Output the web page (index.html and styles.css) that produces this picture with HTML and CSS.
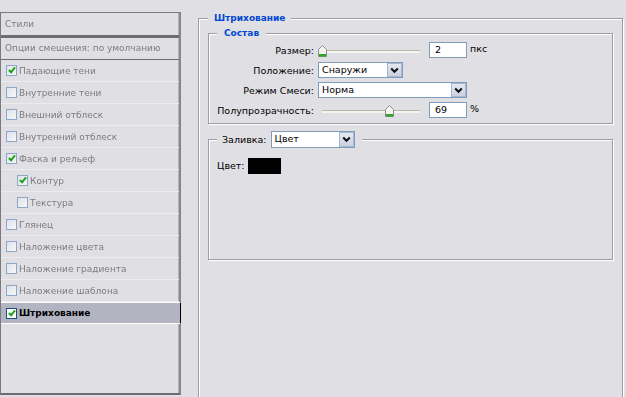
FILE: index.html
```html
<!DOCTYPE html>
<html lang="ru">
<head>
<meta charset="utf-8">
<title>Стиль слоя — Штрихование</title>
<link rel="stylesheet" href="styles.css">
</head>
<body>
<div class="dialog">
  <aside class="styles-panel">
    <div class="panel-head">Стили</div>
    <div class="panel-blend">Опции смешения: по умолчанию</div>
    <ul class="fx-list">
      <li class="fx"><span class="cb on"></span>Падающие тени</li>
      <li class="fx"><span class="cb"></span>Внутренние тени</li>
      <li class="fx"><span class="cb"></span>Внешний отблеск</li>
      <li class="fx"><span class="cb"></span>Внутренний отблеск</li>
      <li class="fx"><span class="cb on"></span>Фаска и рельеф</li>
      <li class="fx sub"><span class="cb on"></span>Контур</li>
      <li class="fx sub"><span class="cb"></span>Текстура</li>
      <li class="fx"><span class="cb"></span>Глянец</li>
      <li class="fx"><span class="cb"></span>Наложение цвета</li>
      <li class="fx"><span class="cb"></span>Наложение градиента</li>
      <li class="fx"><span class="cb"></span>Наложение шаблона</li>
      <li class="fx active"><span class="cb on"></span>Штрихование</li>
    </ul>
  </aside>

  <main class="settings">
    <fieldset class="group outer">
      <legend class="title">Штрихование</legend>

      <fieldset class="group structure">
        <legend class="title sub-title">Состав</legend>
        <div class="form-grid">
          <span class="lbl">Размер:</span>
          <div class="ctrl">
            <div class="slider">
              <div class="track"></div>
              <svg class="thumb" style="left:0px" width="9" height="12" viewBox="0 0 9 12"><path d="M0.5 4.5 L4.5 0.5 L8.5 4.5 V11.5 H0.5 Z" fill="#f3f3f0" stroke="#8d8d8a"/><rect x="1" y="9" width="7" height="2.5" fill="#2ba82b"/></svg>
            </div>
            <span class="field">2</span>
            <span class="unit">пкс</span>
          </div>

          <span class="lbl">Положение:</span>
          <div class="ctrl">
            <div class="select w85"><span class="sel-text">Снаружи</span><span class="dd"><svg width="9" height="7" viewBox="0 0 9 7"><path d="M1.2 1.5 L4.5 4.8 L7.8 1.5" fill="none" stroke="#111" stroke-width="2"/></svg></span></div>
          </div>

          <span class="lbl">Режим Смеси:</span>
          <div class="ctrl">
            <div class="select w149"><span class="sel-text">Норма</span><span class="dd"><svg width="9" height="7" viewBox="0 0 9 7"><path d="M1.2 1.5 L4.5 4.8 L7.8 1.5" fill="none" stroke="#111" stroke-width="2"/></svg></span></div>
          </div>

          <span class="lbl">Полупрозрачность:</span>
          <div class="ctrl">
            <div class="slider">
              <div class="track"></div>
              <svg class="thumb" style="left:67px" width="9" height="12" viewBox="0 0 9 12"><path d="M0.5 4.5 L4.5 0.5 L8.5 4.5 V11.5 H0.5 Z" fill="#f3f3f0" stroke="#8d8d8a"/><rect x="1" y="9" width="7" height="2.5" fill="#2ba82b"/></svg>
            </div>
            <span class="field">69</span>
            <span class="unit">%</span>
          </div>
        </div>
      </fieldset>

      <fieldset class="group fill">
        <legend class="fill-legend">
          <span>Заливка:</span>
          <div class="select w84 tall"><span class="sel-text">Цвет</span><span class="dd"><svg width="9" height="7" viewBox="0 0 9 7"><path d="M1.2 1.5 L4.5 4.8 L7.8 1.5" fill="none" stroke="#111" stroke-width="2"/></svg></span></div>
        </legend>
        <div class="fill-body">
          <span>Цвет:</span>
          <span class="swatch"></span>
        </div>
      </fieldset>
    </fieldset>
  </main>
</div>
</body>
</html>
```

FILE: styles.css
```css
html, body {
  margin: 0;
  padding: 0;
}

body {
  width: 626px;
  height: 397px;
  overflow: hidden;
  background: #e0dfe3;
  font-family: "DejaVu Sans", "Noto Sans", sans-serif;
  font-size: 9.5px;
  color: #000;
}

.dialog {
  display: flex;
  align-items: flex-start;
}

/* ---------- left: styles list ---------- */
.styles-panel {
  width: 181px;
  height: 383px;
  margin-top: 12px;
  box-sizing: border-box;
  border-top: 1px solid #7b7b7f;
  border-left: 1px solid #7b7b7f;
  border-right: 2px solid #88888c;
  border-bottom: 2px solid #6c6c70;
  box-shadow: inset -1px 0 0 #b4b4b8;
  display: flex;
  flex-direction: column;
  font-size: 9px;
}

.panel-head,
.panel-blend {
  padding-left: 4px;
  color: #7c7c80;
  filter: blur(0.5px);
}

.panel-head {
  height: 22px;
  line-height: 22px;
  border-bottom: 3px solid #6e6e72;
}

.panel-blend {
  height: 21px;
  line-height: 21px;
  border-bottom: 1px solid #6e6e72;
}

.fx-list {
  list-style: none;
  margin: 0;
  padding: 0;
}

.fx {
  height: 21px;
  border-bottom: 1px solid #ececef;
  display: flex;
  align-items: center;
  gap: 2px;
  padding-left: 5px;
  color: #7c7c80;
  filter: blur(0.5px);
}

.fx.sub {
  padding-left: 16px;
}

.fx.active {
  height: 20px;
  border-top: 1px solid #fff;
  border-bottom: 1px solid #fff;
  border-right: 1px solid #000;
  margin-right: -2px;
  background: #b2b5c1;
  color: #000;
  font-weight: bold;
  filter: none;
}

.cb {
  position: relative;
  width: 11px;
  height: 11px;
  box-sizing: border-box;
  border: 1px solid #8fa6c4;
  background: linear-gradient(135deg, #dfe3ea, #f6f7f9);
  flex: none;
}

.fx.active .cb {
  border-color: #1d4f86;
  background: #fff;
}

.cb.on::after {
  content: "";
  position: absolute;
  left: 3px;
  top: 0px;
  width: 2px;
  height: 5px;
  border: solid #1fa31f;
  border-width: 0 2px 2px 0;
  transform: rotate(40deg);
}

/* ---------- right: settings ---------- */
.settings {
  margin-left: 17px;
  width: 425px;
  flex: none;
}

.group {
  margin: 0;
  min-width: 0;
  border: 1px solid #9c9ca1;
  box-shadow: inset 1px 1px 0 #fff, 1px 1px 0 #fff;
}

.outer {
  margin-top: 12px;
  padding: 3px 9px 0;
  height: 400px;
  box-sizing: border-box;
}

.title {
  padding: 0 6px;
  line-height: 12px;
  height: 12px;
  color: #0047d4;
  font-weight: bold;
  font-size: 9px;
  background: #e0dfe3;
}

.structure {
  padding: 1px 8px 3px 8px;
}

.sub-title {
  padding: 0 7px;
}

.form-grid {
  display: grid;
  grid-template-columns: 97px 1fr;
  grid-auto-rows: 20px;
  column-gap: 4px;
  align-items: center;
}

.lbl {
  text-align: right;
  white-space: nowrap;
}

.ctrl {
  display: flex;
  align-items: center;
}

.slider {
  position: relative;
  width: 104px;
  height: 16px;
  flex: none;
  margin-right: 7px;
  display: flex;
  align-items: center;
}

.track {
  margin-left: 4px;
  margin-top: 2px;
  width: 98px;
  height: 2px;
  border-top: 1px solid #b8b5a9;
  background: #f6f4ec;
}

.thumb {
  position: absolute;
  top: 3px;
}

.field {
  width: 38px;
  height: 16px;
  box-sizing: border-box;
  border: 1px solid #7f9db9;
  background: #fff;
  padding-left: 5px;
  line-height: 14px;
  flex: none;
}

.unit {
  margin-left: 3px;
  margin-top: -3px;
}

.select {
  display: flex;
  height: 16px;
  box-sizing: border-box;
  border: 1px solid #7f9db9;
  background: #fff;
  flex: none;
}

.select.tall {
  height: 17px;
}

.w84 { width: 84px; }
.w85 { width: 85px; }
.w149 { width: 149px; }

.sel-text {
  flex: 1;
  padding-left: 3px;
  line-height: 14px;
  font-weight: normal;
  color: #000;
}

.dd {
  width: 15px;
  margin: 0;
  box-sizing: border-box;
  border: 1px solid #a7b6d2;
  background: linear-gradient(#e4e8f1, #c9d1e2);
  display: flex;
  align-items: center;
  justify-content: center;
}

.fill {
  margin-top: 7px;
  padding: 0 8px;
}

.fill-legend {
  display: flex;
  align-items: center;
  gap: 4px;
  padding: 0 7px 0 5px;
  background: #e0dfe3;
}

.fill-body {
  height: 111px;
  box-sizing: border-box;
  padding-top: 10px;
  display: flex;
  align-items: flex-start;
  gap: 3px;
}

.fill-body span:first-child {
  line-height: 16px;
}

.swatch {
  width: 33px;
  height: 16px;
  background: #000;
}
```
